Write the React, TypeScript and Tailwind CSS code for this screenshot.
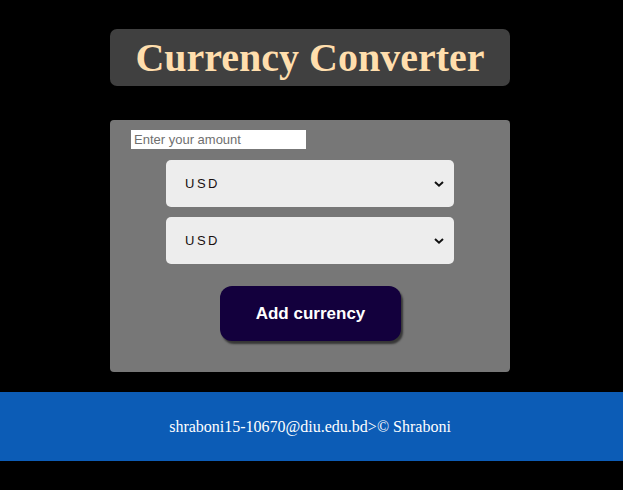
import React from "react";

export default function App() {
  return (
    <div className="min-h-[490px] bg-black pt-[29px]">
      <div className="ml-[110px] flex h-[57px] w-[400px] items-center justify-center rounded-[7px] bg-[#404040]">
        <h1
          className="text-[40px] font-bold leading-none text-[#ffdead]"
          style={{ fontFamily: '"Liberation Serif", "Times New Roman", serif' }}
        >
          Currency Converter
        </h1>
      </div>

      <div
        className="ml-[110px] mt-[34px] h-[252px] w-[400px] rounded-[4px] bg-[#777777] pt-[10px]"
        style={{ fontFamily: '"Liberation Sans", Arial, sans-serif' }}
      >
        <div className="pl-[21px]">
          <input
            type="text"
            placeholder="Enter your amount"
            className="block h-[19px] w-[175px] bg-white px-[3px] text-[13px] text-black outline-none placeholder:text-[#6f6f6f]"
          />
        </div>
        <div className="mt-[11px] flex flex-col items-center gap-[10px]">
          {[0, 1].map((i) => (
            <div
              key={i}
              className="relative flex h-[47px] w-[288px] items-center rounded-[5px] bg-[#ededed] pl-[19px]"
            >
              <span className="text-[13px] tracking-[2.5px] text-[#1a1010]">USD</span>
              <svg
                className="absolute right-[10px] top-1/2 -translate-y-1/2"
                width="10"
                height="7"
                viewBox="0 0 10 7"
              >
                <path d="M1 1.5 L5 5.2 L9 1.5" fill="none" stroke="#111" strokeWidth="2" />
              </svg>
            </div>
          ))}
        </div>
        <div className="mt-[22px] flex justify-center pl-[1px]">
          <button className="h-[55px] w-[181px] rounded-[12px] bg-[#13003d] text-[17px] font-bold text-white shadow-[2px_3px_2px_rgba(0,0,0,0.55)]">
            Add currency
          </button>
        </div>
      </div>

      <div
        className="mt-[20px] flex h-[69px] items-center justify-center bg-[#0c5cb6] pr-[3px] text-[16px] text-white"
        style={{ fontFamily: '"Liberation Serif", "Times New Roman", serif' }}
      >
        shraboni15-10670@diu.edu.bd&gt;© Shraboni
      </div>
    </div>
  );
}
